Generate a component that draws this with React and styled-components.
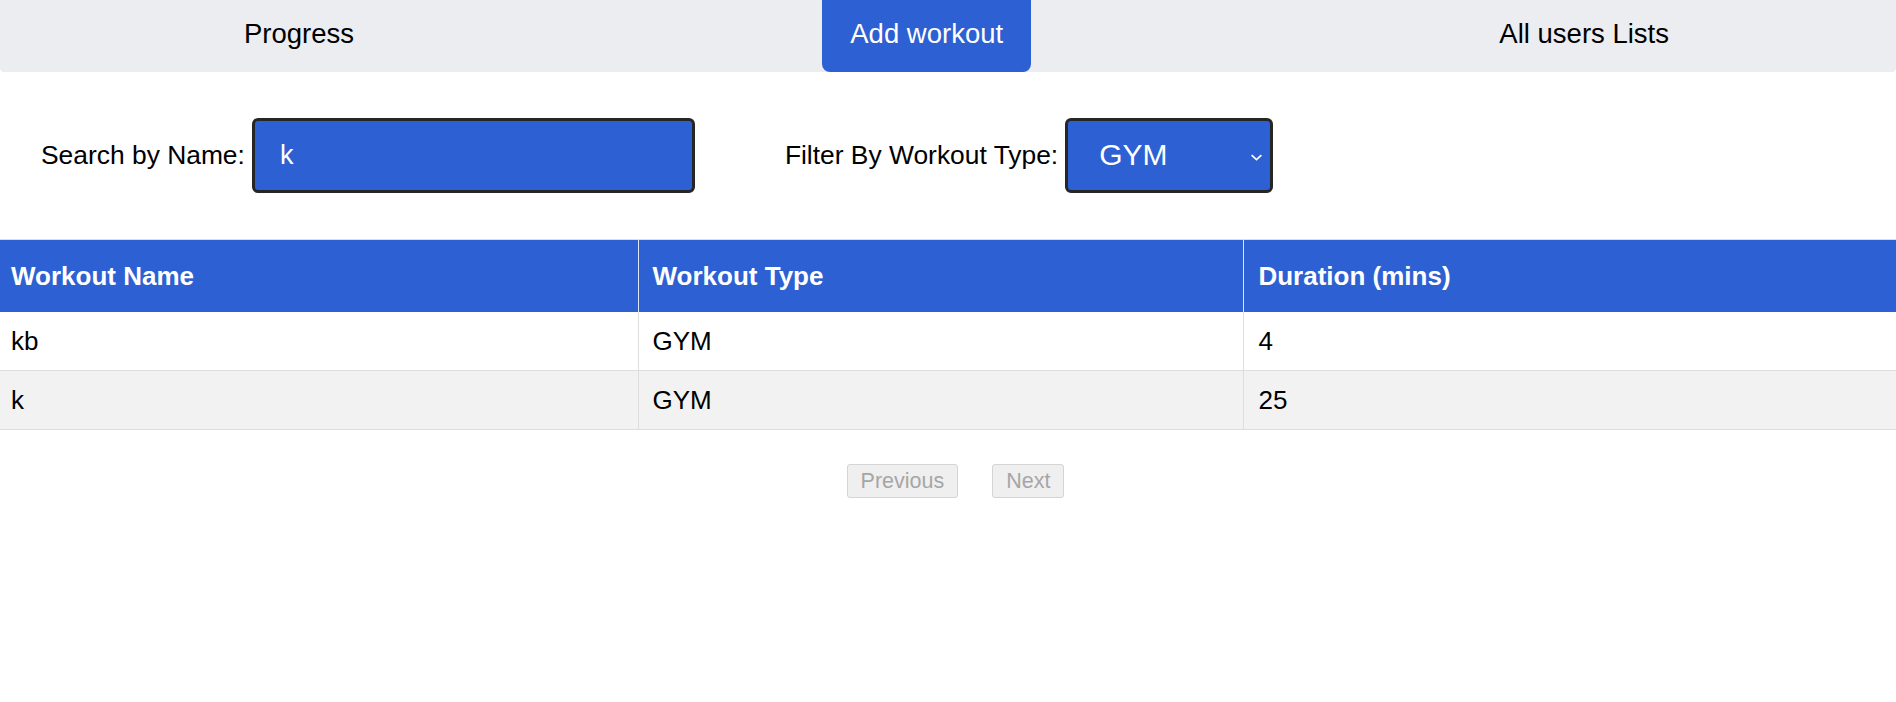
import styled, { createGlobalStyle } from "styled-components";

const GlobalStyle = createGlobalStyle`
  body {
    margin: 0;
    font-family: "Liberation Sans", Arial, sans-serif;
    background: #ffffff;
    color: #000000;
  }
`;

const workouts = [
  { id: 0, name: "kb", type: "GYM", duration: 4 },
  { id: 1, name: "k", type: "GYM", duration: 25 },
];

const App = () => {
  return (
    <Page>
      <GlobalStyle />
      <Nav>
        <NavItem>Progress</NavItem>
        <NavItem active>Add workout</NavItem>
        <NavItem>All users Lists</NavItem>
      </Nav>

      <Filters>
        <Field gap="7px">
          <Label>Search by Name:</Label>
          <SearchInput type="text" defaultValue="k" />
        </Field>
        <Field gap="7px">
          <Label>Filter By Workout Type:</Label>
          <SelectWrap>
            <TypeSelect defaultValue="GYM">
              <option value="">All</option>
              <option value="GYM">GYM</option>
              <option value="RUNNING">RUNNING</option>
              <option value="YOGA">YOGA</option>
            </TypeSelect>
            <Chevron viewBox="0 0 12 8" aria-hidden="true">
              <path d="M1.5 1.8 L6 6 L10.5 1.8" />
            </Chevron>
          </SelectWrap>
        </Field>
      </Filters>

      <Table>
        <colgroup>
          <col style={{ width: "33.65%" }} />
          <col style={{ width: "31.96%" }} />
          <col style={{ width: "34.39%" }} />
        </colgroup>
        <thead>
          <tr>
            <Th>Workout Name</Th>
            <Th>Workout Type</Th>
            <Th>Duration (mins)</Th>
          </tr>
        </thead>
        <tbody>
          {workouts.map((w) => (
            <Row key={w.id}>
              <Td>{w.name}</Td>
              <Td>{w.type}</Td>
              <Td>{w.duration}</Td>
            </Row>
          ))}
        </tbody>
      </Table>

      <Pagination>
        <PageButton disabled>Previous</PageButton>
        <PageButton disabled>Next</PageButton>
      </Pagination>
    </Page>
  );
};

const Page = styled.div`
  width: 100%;
`;

const Nav = styled.nav`
  height: 72px;
  background: #ecedf1;
  display: flex;
  justify-content: space-between;
  align-items: stretch;
  padding: 0 199px 0 216px;
  border-radius: 0 0 4px 4px;
  box-sizing: border-box;
`;

const NavItem = styled.div`
  display: flex;
  align-items: center;
  padding: 0 28px 4px 28px;
  font-size: 27.5px;
  color: ${(p) => (p.active ? "#ffffff" : "#000000")};
  background: ${(p) => (p.active ? "#2d60d2" : "transparent")};
  border-radius: 0 0 8px 8px;
  cursor: pointer;
`;

const Filters = styled.div`
  display: flex;
  align-items: center;
  gap: 90px;
  padding: 46px 0 46px 41px;
`;

const Field = styled.div`
  display: flex;
  align-items: center;
  gap: ${(p) => p.gap};
`;

const Label = styled.label`
  font-size: 26.4px;
  color: #000000;
`;

const SearchInput = styled.input`
  width: 443px;
  height: 75px;
  box-sizing: border-box;
  border: 3px solid #262626;
  border-radius: 6px;
  background: #2d60d2;
  color: #ffffff;
  font-family: "Liberation Sans", Arial, sans-serif;
  font-size: 27px;
  padding: 0 25px;
  outline: none;
`;

const SelectWrap = styled.div`
  position: relative;
  display: flex;
`;

const TypeSelect = styled.select`
  appearance: none;
  width: 208px;
  height: 75px;
  box-sizing: border-box;
  border: 3px solid #262626;
  border-radius: 6px;
  background: #2d60d2;
  color: #ffffff;
  font-family: "Liberation Sans", Arial, sans-serif;
  font-size: 30px;
  padding: 0 8px 2px 31px;
  outline: none;
`;

const Chevron = styled.svg`
  position: absolute;
  right: 10px;
  top: 35px;
  width: 13px;
  height: 9px;
  fill: none;
  stroke: #ffffff;
  stroke-width: 1.6;
  pointer-events: none;
`;

const Table = styled.table`
  width: 100%;
  border-collapse: collapse;
  table-layout: fixed;
  border-top: 1px solid #dddddd;
`;

const Th = styled.th`
  height: 72px;
  background: #2d60d2;
  color: #ffffff;
  font-size: 26px;
  font-weight: bold;
  text-align: left;
  padding: 0 14px;
  border-left: 1px solid #dfe6f7;
  &:first-child {
    border-left: none;
    padding-left: 11px;
  }
`;

const Row = styled.tr`
  &:nth-child(even) {
    background: #f2f2f2;
  }
`;

const Td = styled.td`
  height: 58px;
  font-size: 26px;
  padding: 0 14px;
  border-left: 1px solid #dddddd;
  border-bottom: 1px solid #dddddd;
  &:first-child {
    border-left: none;
    padding-left: 11px;
  }
`;

const Pagination = styled.div`
  display: flex;
  justify-content: center;
  gap: 34px;
  margin-top: 34px;
  padding-left: 15px;
`;

const PageButton = styled.button`
  height: 34px;
  padding: 0 13px;
  font-family: "Liberation Sans", Arial, sans-serif;
  font-size: 21.5px;
  color: #a6a6a6;
  background: #efefef;
  border: 1px solid #d4d4d4;
  border-radius: 3px;
`;

export default App;
